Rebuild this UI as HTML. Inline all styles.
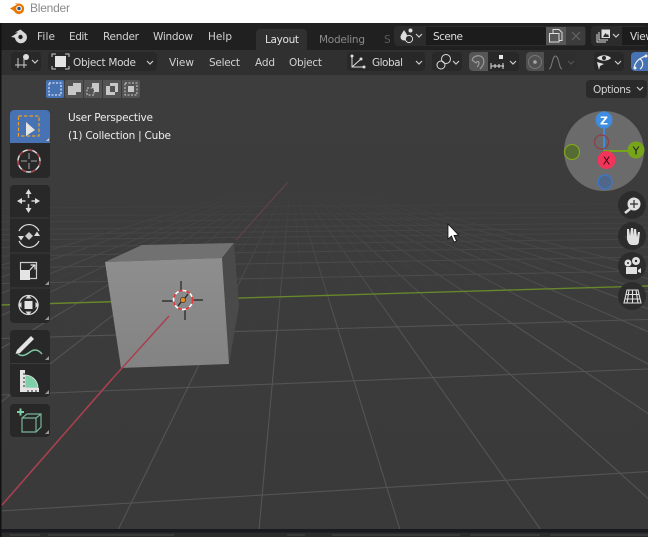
<!DOCTYPE html>
<html><head><meta charset="utf-8"><title>Blender</title>
<style>
html,body{margin:0;padding:0;width:648px;height:537px;overflow:hidden;background:#3b3b3b}
svg{display:block}
text{font-family:"DejaVu Sans","Liberation Sans",sans-serif;font-size:10.5px;fill:#d2d2d2}
</style></head><body>
<svg width="648" height="537" viewBox="0 0 648 537" xmlns="http://www.w3.org/2000/svg">
<defs>
<linearGradient id="fade" gradientUnits="userSpaceOnUse" x1="0" y1="185" x2="0" y2="330">
<stop offset="0" stop-color="#000"/><stop offset=".3" stop-color="#555"/><stop offset="1" stop-color="#fff"/></linearGradient>
<linearGradient id="fade2" gradientUnits="userSpaceOnUse" x1="0" y1="190" x2="0" y2="340">
<stop offset="0" stop-color="#000"/><stop offset=".35" stop-color="#666"/><stop offset="1" stop-color="#000"/></linearGradient>
<mask id="m" maskUnits="userSpaceOnUse" x="0" y="0" width="648" height="537"><rect width="648" height="537" fill="url(#fade)"/></mask>
<mask id="m2" maskUnits="userSpaceOnUse" x="0" y="0" width="648" height="537"><rect width="648" height="537" fill="url(#fade2)"/></mask>
<linearGradient id="front" x1="0" y1="0" x2="0" y2="1"><stop offset="0" stop-color="#8e8e8e"/><stop offset="1" stop-color="#838383"/></linearGradient>
<linearGradient id="bgv" x1="0" y1="0" x2="0" y2="1"><stop offset="0" stop-color="#3d3d3d"/><stop offset="1" stop-color="#3a3a3a"/></linearGradient>
</defs>

<!-- viewport -->
<rect x="0" y="75" width="648" height="455" fill="url(#bgv)"/>
<g mask="url(#m2)" fill="none" stroke="#4c4c4c" stroke-width="1">
<path d="M291 177L330 530M291 177L471 530M291 177L612 530M291 177L753 530M291 177L894 530M291 177L1035 530M291 177L1177 530M291 177L1318 530M291 177L189 530M291 177L47 530M291 177L-94 530M291 177L-235 530M291 177L-376 530M291 177L-518 530"/>
</g>
<g mask="url(#m)" fill="none" stroke="#545454" stroke-width="1.1">
<path d="M291 177L118 530M291 177L259 530M291 177L400 530M291 177L541 530M291 177L683 530M291 177L824 530M291 177L965 530M291 177L1106 530M291 177L1248 530M291 177L1389 530M291 177L1530 530M291 177L1671 530M291 177L-164 530M291 177L-306 530M291 177L-447 530M291 177L-588 530M291 177L-730 530M291 177L-871 530"/>
<path d="M0 511L648 471.6M0 395L648 369M0 338.5L648 319.4M0 283.5L648 271M0 268L648 257M0 256L648 247M0 247.5L648 239M0 240L648 233M0 234.5L648 228M0 229.6L648 223M0 222L648 217M0 216L648 212M0 208L648 204"/>
</g>
<!-- axes -->
<path d="M2 505L113 378" stroke="#a8404f" stroke-width="1.600" fill="none"/>
<path d="M236 240L288 182" stroke="#5f4247" stroke-width="1.300" fill="none"/>
<path d="M0 305L648 286" stroke="#66872a" stroke-width="1.400" fill="none"/>
<!-- cube -->
<polygon points="105,262 142,245 234,243 222,258" fill="#717171"/>
<polygon points="222,258 234,243 239,306 229,364" fill="#4a4a4a"/>
<polygon points="105,262 222,258 229,364 121,368" fill="url(#front)"/>
<path d="M169 316L113 378" stroke="#a8404f" stroke-width="1.500" fill="none"/>
<!-- 3d cursor and origin -->
<g fill="none">
<path d="M162 301H173M193 300H203M181 281V291M185 310V320M178 306L181 302M185 298L188 294" stroke="#222" stroke-width="1.200"/>
<circle cx="183" cy="300" r="9.500" stroke="#fff" stroke-width="1.600"/>
<circle cx="183" cy="300" r="9.500" stroke="#e2353a" stroke-width="1.700" stroke-dasharray="4 4"/>
<circle cx="183" cy="300" r="2.600" fill="#ec8b1d" stroke="#222" stroke-width=".6"/>
</g>

<!-- title bar -->
<rect x="0" y="0" width="648" height="23" fill="#fff"/>
<g>
<path d="M10 8.500L17 4.500L14.500 3.500H19a5.300 5.300 0 1 1-5 7.500z" fill="#ea7600"/>
<circle cx="19" cy="8.500" r="2.800" fill="#fff"/><circle cx="19" cy="8.500" r="1.700" fill="#265787"/>
</g>
<text x="30" y="12" style="fill:#8a8a8a;font-family:'Liberation Sans',sans-serif;font-size:12px" textLength="40">Blender</text>

<!-- top bar -->
<rect x="0" y="23" width="648" height="27" fill="#202020"/>
<path d="M11 37L18 32.500H15L20.500 29.500L26 34a6 6 0 1 1-11 4l-1.500-.6z" fill="#d8d8d8"/>
<circle cx="20.500" cy="37" r="2.200" fill="#202020"/>
<text x="37" y="40" textLength="18">File</text>
<text x="69" y="40" textLength="19">Edit</text>
<text x="103" y="40" textLength="36">Render</text>
<text x="153" y="40" textLength="40">Window</text>
<text x="208" y="40" textLength="24">Help</text>
<path d="M256 33a4 4 0 0 1 4-4h43a4 4 0 0 1 4 4v17h-51z" fill="#303030"/>
<text x="265" y="43" textLength="34" style="fill:#e2e2e2">Layout</text>
<text x="319" y="43" textLength="46" style="fill:#8a8a8a">Modeling</text>
<text x="384" y="43" style="fill:#5a5a5a">S</text>

<!-- scene selector -->
<rect x="394" y="26" width="192" height="20" rx="4" fill="#2c2c2c"/>
<rect x="426" y="27" width="120" height="18" fill="#1c1c1c"/>
<rect x="546" y="27" width="20" height="18" fill="#575757"/>
<rect x="566" y="27" width="19" height="18" fill="#3c3c3c"/>
<path d="M404 30c2 3 3.500 5 3.500 7a3 3 0 0 1-7 0c0-2 2-4 3.500-7z" fill="#ddd"/><circle cx="410.500" cy="30.500" r="2" fill="#ddd"/>
<circle cx="409" cy="39" r="3.600" fill="#2c2c2c" stroke="#ddd"/>
<path d="M416 34l3 3 3-3" stroke="#ccc" fill="none" stroke-width="1.200"/>
<text x="433" y="40" textLength="30" style="fill:#ddd">Scene</text>
<path d="M553 33v-3.500h6l3 3v8h-3" fill="none" stroke="#ddd"/>
<path d="M549.500 33.500h9.500v8.500h-9.500z" fill="#575757" stroke="#ddd"/>
<path d="M572 32l8 8M580 32l-8 8" stroke="#666" stroke-width="1.200"/>
<rect x="591" y="26" width="57" height="20" rx="4" fill="#2c2c2c"/>
<rect x="622" y="27" width="26" height="18" fill="#1c1c1c"/>
<path d="M601.500 29.500h8.500v8.500h-8.500z" fill="#ddd"/>
<path d="M599 32v8h9M597 34v8h9" fill="none" stroke="#ddd"/>
<path d="M603 37l2.500-4 1.500 2 1-1 1 3z" fill="#2c2c2c"/>
<path d="M613 34l3 3 3-3" stroke="#ccc" fill="none" stroke-width="1.200"/>
<text x="630" y="40" textLength="24" style="fill:#ddd">View</text>

<!-- header -->
<rect x="0" y="50" width="648" height="25" fill="#303030"/>
<rect x="11" y="52" width="30" height="19" rx="4" fill="#282828"/>
<path d="M15 65h12M18 58v10M24 59v9" stroke="#ccc" fill="none"/>
<circle cx="26" cy="57" r="3" fill="#ddd"/>
<path d="M32 60l3 3 3-3" stroke="#ccc" fill="none" stroke-width="1.200"/>
<rect x="48" y="52" width="109" height="19" rx="4" fill="#282828"/>
<rect x="55" y="56" width="11" height="11" fill="#e4e4e4"/>
<path d="M52 57v-3h4M65 54h4v3M52 66v3h4M65 69h4v-3" stroke="#ccc" fill="none"/>
<text x="73" y="66" textLength="63" style="fill:#d8d8d8">Object Mode</text>
<path d="M147 61l3 3 3-3" stroke="#ccc" fill="none" stroke-width="1.200"/>
<text x="169" y="66" textLength="25">View</text>
<text x="209" y="66" textLength="31">Select</text>
<text x="255" y="66" textLength="20">Add</text>
<text x="289" y="66" textLength="33">Object</text>

<rect x="347" y="52" width="78" height="19" rx="4" fill="#282828"/>
<path d="M352 55v12h13M352 67l9-8" stroke="#ddd" fill="none"/>
<circle cx="352" cy="56" r="1.500" fill="#ddd"/><circle cx="361" cy="59" r="1.500" fill="#ddd"/><circle cx="364" cy="67" r="1.500" fill="#ddd"/>
<text x="372" y="66" textLength="31" style="fill:#d8d8d8">Global</text>
<path d="M416 61l3 3 3-3" stroke="#ccc" fill="none" stroke-width="1.200"/>
<rect x="432" y="52" width="30" height="19" rx="4" fill="#282828"/>
<circle cx="441" cy="65" r="4" fill="none" stroke="#ddd"/><circle cx="446" cy="59" r="4.500" fill="none" stroke="#ddd"/>
<path d="M453 61l3 3 3-3" stroke="#ccc" fill="none" stroke-width="1.200"/>
<rect x="469" y="52" width="50" height="19" rx="4" fill="#282828"/>
<path d="M469 56a4 4 0 0 1 4-4h15v19h-15a4 4 0 0 1-4-4z" fill="#565656"/>
<path d="M472 60a6.500 6.500 0 0 1 11-2c2 4 0 8-3 11M472 60l4 3c1-2 3-2 3 0 0 2-1 3-2 4" fill="none" stroke="#9a9a9a" stroke-width="1.200"/>
<path d="M491 63v6M491 66h13M495 64v4M499 64v4M503 63v6" stroke="#ddd" fill="none"/>
<rect x="499" y="55" width="4" height="4" fill="#e8e8e8"/>
<path d="M510 61l3 3 3-3" stroke="#ccc" fill="none" stroke-width="1.200"/>
<rect x="526" y="52" width="50" height="19" rx="4" fill="#2e2e2e"/>
<path d="M526 56a4 4 0 0 1 4-4h14v19h-14a4 4 0 0 1-4-4z" fill="#505050"/>
<circle cx="535" cy="62" r="6.500" fill="none" stroke="#777"/><circle cx="535" cy="62" r="1.800" fill="#a8a8a8"/>
<path d="M549 69c3 0 3-13 6.500-13s3.500 13 6.500 13" fill="none" stroke="#7a7a7a"/>
<path d="M568 61l3 3 3-3" stroke="#555" fill="none" stroke-width="1.200"/>
<rect x="594" y="52" width="30" height="19" rx="4" fill="#282828"/>
<path d="M597 58c3-3.500 11-3.500 14 0c-3 3.500-11 3.500-14 0z" fill="#e0e0e0"/><circle cx="604" cy="58" r="2" fill="#282828"/>
<path d="M597 62l7 2-4 2-1 4z" fill="#e0e0e0"/>
<path d="M615 61l3 3 3-3" stroke="#ccc" fill="none" stroke-width="1.200"/>
<path d="M631 56a4 4 0 0 1 4-4h13v19h-13a4 4 0 0 1-4-4z" fill="#4772b3"/>
<path d="M634 68c1-6 5-10 12-12M640 69a6 6 0 0 0 0-10" fill="none" stroke="#eee" stroke-width="1.200"/>
<circle cx="635" cy="68" r="1.500" fill="#eee"/><circle cx="646" cy="56" r="1.500" fill="#eee"/>

<!-- select modes -->
<rect x="46" y="80" width="18" height="18" rx="2" fill="#4772b3"/>
<rect x="65" y="80" width="75" height="18" rx="2" fill="#545454"/>
<path d="M83.500 80v18M102.500 80v18M121.500 80v18" stroke="#3b3b3b"/>
<rect x="49" y="83" width="12" height="12" fill="none" stroke="#fff" stroke-dasharray="2 1.500"/>
<path d="M68 86h5v-3h8v9h-5v3h-8z" fill="#c8c8c8"/>
<rect x="87" y="88" width="7" height="7" fill="none" stroke="#ccc" stroke-dasharray="2 1.500"/>
<path d="M92 83h7v9h-5v-4h-2z" fill="#c8c8c8"/>
<path d="M106 86h4v-3h8v9h-3v3h-9z" fill="#c8c8c8"/><rect x="110" y="86" width="5" height="6" fill="#545454"/>
<rect x="125" y="83" width="12" height="12" fill="none" stroke="#ccc" stroke-dasharray="2 1.500"/>
<rect x="128" y="86" width="6" height="6" fill="#c8c8c8"/>

<!-- options -->
<rect x="586" y="80" width="61" height="18" rx="4" fill="#2a2a2a"/>
<text x="593" y="93" textLength="38" style="fill:#d2d2d2">Options</text>
<path d="M637 87l3 3 3-3" stroke="#ccc" fill="none" stroke-width="1.200"/>

<!-- overlay text -->
<text x="68" y="121" textLength="85" style="fill:#eee">User Perspective</text>
<text x="68" y="139" textLength="103" style="fill:#eee">(1) Collection | Cube</text>

<!-- toolbar -->
<rect x="10" y="110" width="40" height="68" rx="4" fill="#282828"/>
<path d="M10 143v-29a4 4 0 0 1 4-4h32a4 4 0 0 1 4 4v29z" fill="#4772b3"/>
<rect x="18.500" y="116" width="20.500" height="20" fill="none" stroke="#f0a020" stroke-width="1.200" stroke-dasharray="3.500 2"/>
<path d="M26 122l9 8-9 6z" fill="#e4e4e4"/>
<path d="M49 141v-3l-3 3z" fill="#ccc"/>
<circle cx="29" cy="161" r="11" fill="none" stroke="#ddd" stroke-width="1.500"/>
<circle cx="29" cy="161" r="11" fill="none" stroke="#a53e46" stroke-width="1.600" stroke-dasharray="5 5"/>
<path d="M21 161h6M31 161h6M29 153v6M29 163v6" stroke="#888" stroke-width="1.300"/>

<rect x="10" y="185" width="40" height="138" rx="4" fill="#282828"/>
<path d="M10 218h40M10 253h40M10 288h40" stroke="#3a3a3a"/>
<path d="M28.500 189l3 5h-6zM28.500 213l3-5h-6zM17 201l5-3v6zM40 201l-5-3v6z" fill="#ddd"/>
<path d="M28.500 194v4M28.500 204v4M22 201h3.500M31.500 201h3.500" stroke="#ccc" stroke-width="1.500"/>
<path d="M19 231a11 11 0 0 1 20 0M39 241a11 11 0 0 1-20 0" fill="none" stroke="#ddd" stroke-width="1.200"/>
<path d="M18 236l6 0-3 4.500zM40 236l-6 0 3-4.500z" fill="#ddd"/>
<path d="M29 232l4 4-4 4-4-4z" fill="#ccc"/>
<path d="M20.500 270v-7.500h16v16h-7" fill="none" stroke="#ccc" stroke-width="1.200"/>
<rect x="20" y="270" width="10" height="10" fill="#e4e4e4"/>
<path d="M29 271l5.500-6M30.500 265h4.500v4.500" fill="none" stroke="#e4e4e4" stroke-width="1.200"/>
<path d="M49 285v-4l-4 4zM49 320v-4l-4 4z" fill="#999"/>
<circle cx="28.500" cy="305" r="9.500" fill="none" stroke="#ddd" stroke-width="1.300"/>
<rect x="24.500" y="301" width="8" height="8" fill="#e4e4e4"/>
<path d="M28.500 295l3 3.500h-6zM28.500 315l3-3.500h-6zM18 305l3.500-3v6zM39 305l-3.500-3v6z" fill="#ddd"/>

<rect x="10" y="330" width="40" height="67" rx="4" fill="#282828"/>
<path d="M10 363.500h40" stroke="#3a3a3a"/>
<path d="M17 350l14-14 3 3-14 14-4.500 1z" fill="#e4e4e4"/>
<path d="M18 354c4 3 8 1 12-2c4-3 8-3 12 2" fill="none" stroke="#7fc8a4" stroke-width="1.500"/>
<path d="M49 360v-4l-4 4zM49 394v-4l-4 4z" fill="#999"/>
<path d="M25 375a13 13 0 0 1 13 13h-13z" fill="#7fd0a8" stroke="#e4e4e4" stroke-width=".8"/>
<path d="M20 370h5v18h14v4h-19z" fill="#e4e4e4"/>
<path d="M23 374h2M23 378h2M23 382h2M23 386h2M28 390v2M32 390v2M36 390v2" stroke="#282828"/>

<rect x="10" y="404" width="40" height="33" rx="4" fill="#282828"/>
<path d="M17 412h7M20.500 408.500v7" stroke="#7fd0a8" stroke-width="2"/>
<path d="M22 418l5-4h14v13l-5 5h-14zM22 418h14v14M36 418l5-4" fill="none" stroke="#78b498" stroke-width="1.200"/>
<path d="M49 434v-4l-4 4z" fill="#999"/>

<!-- gizmo -->
<circle cx="604" cy="151" r="40" fill="#6b6b6b"/>
<path d="M604 151V120" stroke="#3f8de0" stroke-width="2"/>
<path d="M604 151H636" stroke="#76a51a" stroke-width="2"/>
<circle cx="601.500" cy="142" r="7" fill="none" stroke="#8d3e48" stroke-width="1.200"/>
<circle cx="572" cy="152" r="7.500" fill="#566a33" stroke="#7fa41f" stroke-width="1.300"/>
<circle cx="605" cy="182" r="7" fill="#50678a" stroke="#3878cc" stroke-width="1.300"/>
<circle cx="604" cy="120" r="8.500" fill="#3f8de0"/>
<text x="604" y="124.500" text-anchor="middle" style="font-weight:bold;font-size:11px;fill:#fff">Z</text>
<circle cx="636" cy="150" r="8.500" fill="#76a51a"/>
<text x="636" y="154.500" text-anchor="middle" style="font-size:11px;fill:#1a1a1a">Y</text>
<circle cx="606.500" cy="160" r="9" fill="#f2345a"/>
<text x="606.500" y="164.500" text-anchor="middle" style="font-size:11px;fill:#3a0a14">X</text>

<!-- nav buttons -->
<g fill="#2c2c2c"><circle cx="632" cy="205" r="14"/><circle cx="632" cy="236" r="14"/><circle cx="632" cy="266" r="14"/><circle cx="632" cy="296" r="14"/></g>
<circle cx="634" cy="204" r="6.500" fill="#e0e0e0"/>
<path d="M630 204h8M634 200v8" stroke="#2c2c2c" stroke-width="1.200"/>
<path d="M625 213l5-4" stroke="#e0e0e0" stroke-width="2.600"/>
<path d="M626 237l2 5c1 2 2 3 5 3h3c2 0 3-2 3-4l1-9h-2l-1 5-1-8h-2v7l-1-8h-2l-1 8-1-7h-2v10l-2-3z" fill="#e0e0e0"/>
<circle cx="628" cy="263" r="3.500" fill="#e0e0e0"/><circle cx="636" cy="261" r="4" fill="#e0e0e0"/>
<circle cx="628" cy="263" r="1" fill="#2c2c2c"/><circle cx="636" cy="261" r="1.200" fill="#2c2c2c"/>
<rect x="626" y="267" width="11" height="7" fill="#e0e0e0"/><path d="M638 270l3-2v5l-3-1z" fill="#e0e0e0"/>
<path d="M627 290h11l3 13h-17zM632.500 290v13M629 290l-2 13M636 290l2 13M626 294.500h13M625 299h15" fill="none" stroke="#e0e0e0" stroke-width="1.100"/>

<!-- bottom seam -->
<rect x="0" y="529" width="648" height="3.500" fill="#191a20"/>
<rect x="0" y="532.500" width="648" height="4.500" fill="#2b2b2b"/>
<path d="M10 535h30M48 535h46M94 535h80M287 535h18M332 535h128M470 535h70M550 535h98" stroke="#3a3a3a" stroke-width="2"/>
<!-- left edge -->
<rect x="0" y="23" width="1.500" height="514" fill="#111"/>
<!-- mouse cursor -->
<path d="M448 224V239L451.500 236L454 242L456.500 241L454 235.500L458.500 235z" fill="#fff" stroke="#111" stroke-width=".8"/>
</svg>
</body></html>
